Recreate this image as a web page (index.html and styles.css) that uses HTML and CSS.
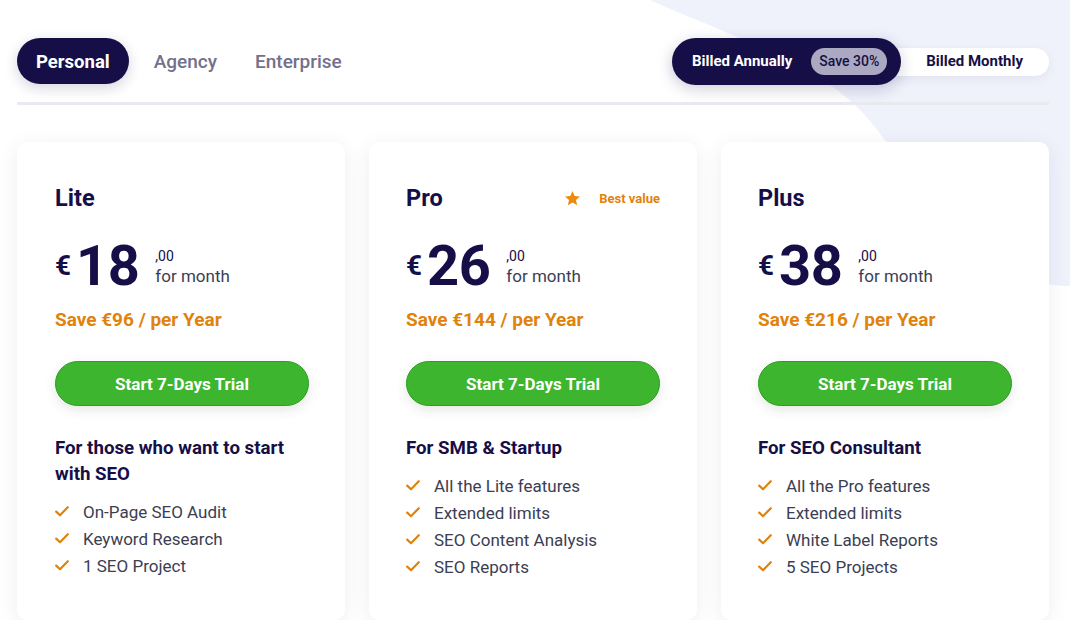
FILE: index.html
```html
<!DOCTYPE html>
<html lang="en">
<head>
<meta charset="utf-8">
<title>Pricing</title>
<link rel="stylesheet" href="styles.css">
</head>
<body>
<svg class="blob" width="1070" height="300" viewBox="0 0 1070 300" aria-hidden="true">
  <path d="M650 0 C 740 40 810 60 860 110 C 905 155 930 235 1000 270 C 1030 283 1055 286 1070 286 L1070 0 Z" fill="#eff1fb"/>
</svg>
<main class="page">
  <header class="topbar">
    <nav class="tabs">
      <span class="tab active">Personal</span>
      <span class="tab">Agency</span>
      <span class="tab">Enterprise</span>
    </nav>
    <div class="billing">
      <div class="billing-on">
        <span>Billed Annually</span>
        <span class="badge">Save 30%</span>
      </div>
      <span class="billing-off">Billed Monthly</span>
    </div>
  </header>
  <hr class="divider">
  <section class="cards">
    <article class="card">
      <div class="card-head"><h2>Lite</h2></div>
      <div class="price">
        <span class="cur">€</span><span class="amount">18</span>
        <span class="meta"><span class="cents">,00</span><span class="per">for month</span></span>
      </div>
      <p class="save">Save €96 / per Year</p>
      <button class="cta">Start 7-Days Trial</button>
      <h3>For those who want to start with SEO</h3>
      <ul class="features">
        <li><svg class="check" viewBox="0 0 14 11"><path d="M1.2 5.6 L5 9.2 L12.8 1.2"/></svg>On-Page SEO Audit</li>
        <li><svg class="check" viewBox="0 0 14 11"><path d="M1.2 5.6 L5 9.2 L12.8 1.2"/></svg>Keyword Research</li>
        <li><svg class="check" viewBox="0 0 14 11"><path d="M1.2 5.6 L5 9.2 L12.8 1.2"/></svg>1 SEO Project</li>
      </ul>
    </article>
    <article class="card">
      <div class="card-head"><h2>Pro</h2>
        <span class="best"><svg class="star" viewBox="0 0 24 24"><path d="M12 1.5 L15.1 8.5 L22.6 9.2 L16.9 14.2 L18.6 21.7 L12 17.8 L5.4 21.7 L7.1 14.2 L1.4 9.2 L8.9 8.5 Z"/></svg>Best value</span>
      </div>
      <div class="price">
        <span class="cur">€</span><span class="amount">26</span>
        <span class="meta"><span class="cents">,00</span><span class="per">for month</span></span>
      </div>
      <p class="save">Save €144 / per Year</p>
      <button class="cta">Start 7-Days Trial</button>
      <h3>For SMB &amp; Startup</h3>
      <ul class="features">
        <li><svg class="check" viewBox="0 0 14 11"><path d="M1.2 5.6 L5 9.2 L12.8 1.2"/></svg>All the Lite features</li>
        <li><svg class="check" viewBox="0 0 14 11"><path d="M1.2 5.6 L5 9.2 L12.8 1.2"/></svg>Extended limits</li>
        <li><svg class="check" viewBox="0 0 14 11"><path d="M1.2 5.6 L5 9.2 L12.8 1.2"/></svg>SEO Content Analysis</li>
        <li><svg class="check" viewBox="0 0 14 11"><path d="M1.2 5.6 L5 9.2 L12.8 1.2"/></svg>SEO Reports</li>
      </ul>
    </article>
    <article class="card">
      <div class="card-head"><h2>Plus</h2></div>
      <div class="price">
        <span class="cur">€</span><span class="amount">38</span>
        <span class="meta"><span class="cents">,00</span><span class="per">for month</span></span>
      </div>
      <p class="save">Save €216 / per Year</p>
      <button class="cta">Start 7-Days Trial</button>
      <h3>For SEO Consultant</h3>
      <ul class="features">
        <li><svg class="check" viewBox="0 0 14 11"><path d="M1.2 5.6 L5 9.2 L12.8 1.2"/></svg>All the Pro features</li>
        <li><svg class="check" viewBox="0 0 14 11"><path d="M1.2 5.6 L5 9.2 L12.8 1.2"/></svg>Extended limits</li>
        <li><svg class="check" viewBox="0 0 14 11"><path d="M1.2 5.6 L5 9.2 L12.8 1.2"/></svg>White Label Reports</li>
        <li><svg class="check" viewBox="0 0 14 11"><path d="M1.2 5.6 L5 9.2 L12.8 1.2"/></svg>5 SEO Projects</li>
      </ul>
    </article>
  </section>
</main>
</body>
</html>
```

FILE: styles.css
```css
* { box-sizing: border-box; }
html, body {
  margin: 0;
  padding: 0;
  background: #ffffff;
  font-family: Roboto, "Liberation Sans", Arial, sans-serif;
  color: #160f47;
  overflow: hidden;
}
.blob {
  position: absolute;
  top: 0;
  left: 0;
  z-index: 0;
}
.page {
  position: relative;
  z-index: 1;
  width: 1032px;
  margin-left: 17px;
  padding-top: 37px;
}
.topbar {
  display: flex;
  justify-content: space-between;
  align-items: center;
  height: 48px;
}
.tabs {
  display: flex;
  align-items: center;
  gap: 0;
}
.tab {
  display: flex;
  align-items: center;
  height: 46px;
  padding: 0 19px;
  border-radius: 999px;
  font-size: 19px;
  font-weight: 500;
  color: #73708b;
}
.tab.active {
  margin-right: 6px;
  padding-top: 1px;
  background: #160f47;
  color: #ffffff;
  font-weight: 700;
  font-size: 18.5px;
  box-shadow: 0 4px 14px rgba(22, 15, 71, 0.18);
}
.billing {
  position: relative;
  display: flex;
  align-items: center;
}
.billing::before {
  content: "";
  position: absolute;
  left: 0;
  right: 0;
  top: 10px;
  bottom: 9px;
  background: #ffffff;
  border-radius: 999px;
  box-shadow: 0 3px 12px rgba(22, 15, 71, 0.06);
}
.billing-on {
  position: relative;
  display: flex;
  align-items: center;
  gap: 19px;
  height: 47px;
  padding: 0 14px 0 20px;
  background: #160f47;
  border-radius: 999px;
  color: #ffffff;
  font-size: 15px;
  font-weight: 700;
  box-shadow: 0 4px 16px rgba(22, 15, 71, 0.2);
}
.badge {
  display: flex;
  align-items: center;
  height: 27px;
  padding: 0 8px;
  border-radius: 999px;
  background: #aba8c1;
  color: #160f47;
  font-size: 14px;
  font-weight: 500;
}
.billing-off {
  position: relative;
  padding: 0 26px 0 25px;
  font-size: 15px;
  font-weight: 700;
  color: #160f47;
}
.divider {
  margin: 17px 0 0;
  border: 0;
  height: 3px;
  background: #e8eaf0;
}
.cards {
  display: grid;
  grid-template-columns: repeat(3, 328px);
  gap: 24px;
  margin-top: 37px;
}
.card {
  background: #ffffff;
  border-radius: 10px;
  height: 478px;
  padding: 41px 37px 0;
  box-shadow: 0 4px 22px rgba(30, 30, 80, 0.07);
}
.card:first-child {
  padding-left: 38px;
}
.card-head {
  display: flex;
  justify-content: space-between;
  align-items: center;
  height: 28px;
  margin-top: 1px;
}
h2 {
  margin: 0;
  font-size: 23.5px;
  font-weight: 700;
  line-height: 28px;
  color: #160f47;
}
.best {
  display: flex;
  align-items: center;
  gap: 18px;
  margin-right: 0;
  font-size: 13px;
  font-weight: 700;
  color: #e1820c;
}
.star {
  width: 17px;
  height: 17px;
  fill: #f08a0f;
}
.price {
  display: flex;
  align-items: center;
  height: 60px;
  margin-top: 24px;
}
.cur {
  font-size: 28px;
  font-weight: 700;
  margin-right: 5px;
  margin-top: -2px;
}
.amount {
  font-size: 56px;
  font-weight: 700;
  line-height: 60px;
  letter-spacing: -0.5px;
}
.meta {
  display: flex;
  flex-direction: column;
  margin-left: 16px;
  margin-top: 2px;
}
.cents {
  font-size: 14px;
  line-height: 18px;
  color: #160f47;
}
.per {
  font-size: 17px;
  line-height: 22px;
  color: #3b3e54;
}
.save {
  margin: 12px 0 0;
  font-size: 19px;
  font-weight: 700;
  line-height: 24px;
  color: #e1820c;
}
.cta {
  display: block;
  width: 254px;
  height: 45px;
  margin-top: 29px;
  border: 1px solid #2b9f1f;
  border-radius: 999px;
  background: #3db52e;
  color: #ffffff;
  font-family: inherit;
  font-size: 17px;
  font-weight: 700;
  box-shadow: 0 4px 12px rgba(30, 60, 30, 0.12);
}
h3 {
  margin: 29px 0 0;
  font-size: 18.7px;
  font-weight: 700;
  line-height: 26px;
  color: #160f47;
}
.features {
  list-style: none;
  margin: 11px 0 0;
  padding: 0;
}
.features li {
  display: flex;
  align-items: center;
  height: 27px;
  font-size: 17px;
  color: #3b3e52;
}
.check {
  width: 14px;
  height: 11px;
  margin-right: 14px;
  fill: none;
  stroke: #e1820c;
  stroke-width: 2.2;
  stroke-linecap: round;
  stroke-linejoin: round;
}
```
